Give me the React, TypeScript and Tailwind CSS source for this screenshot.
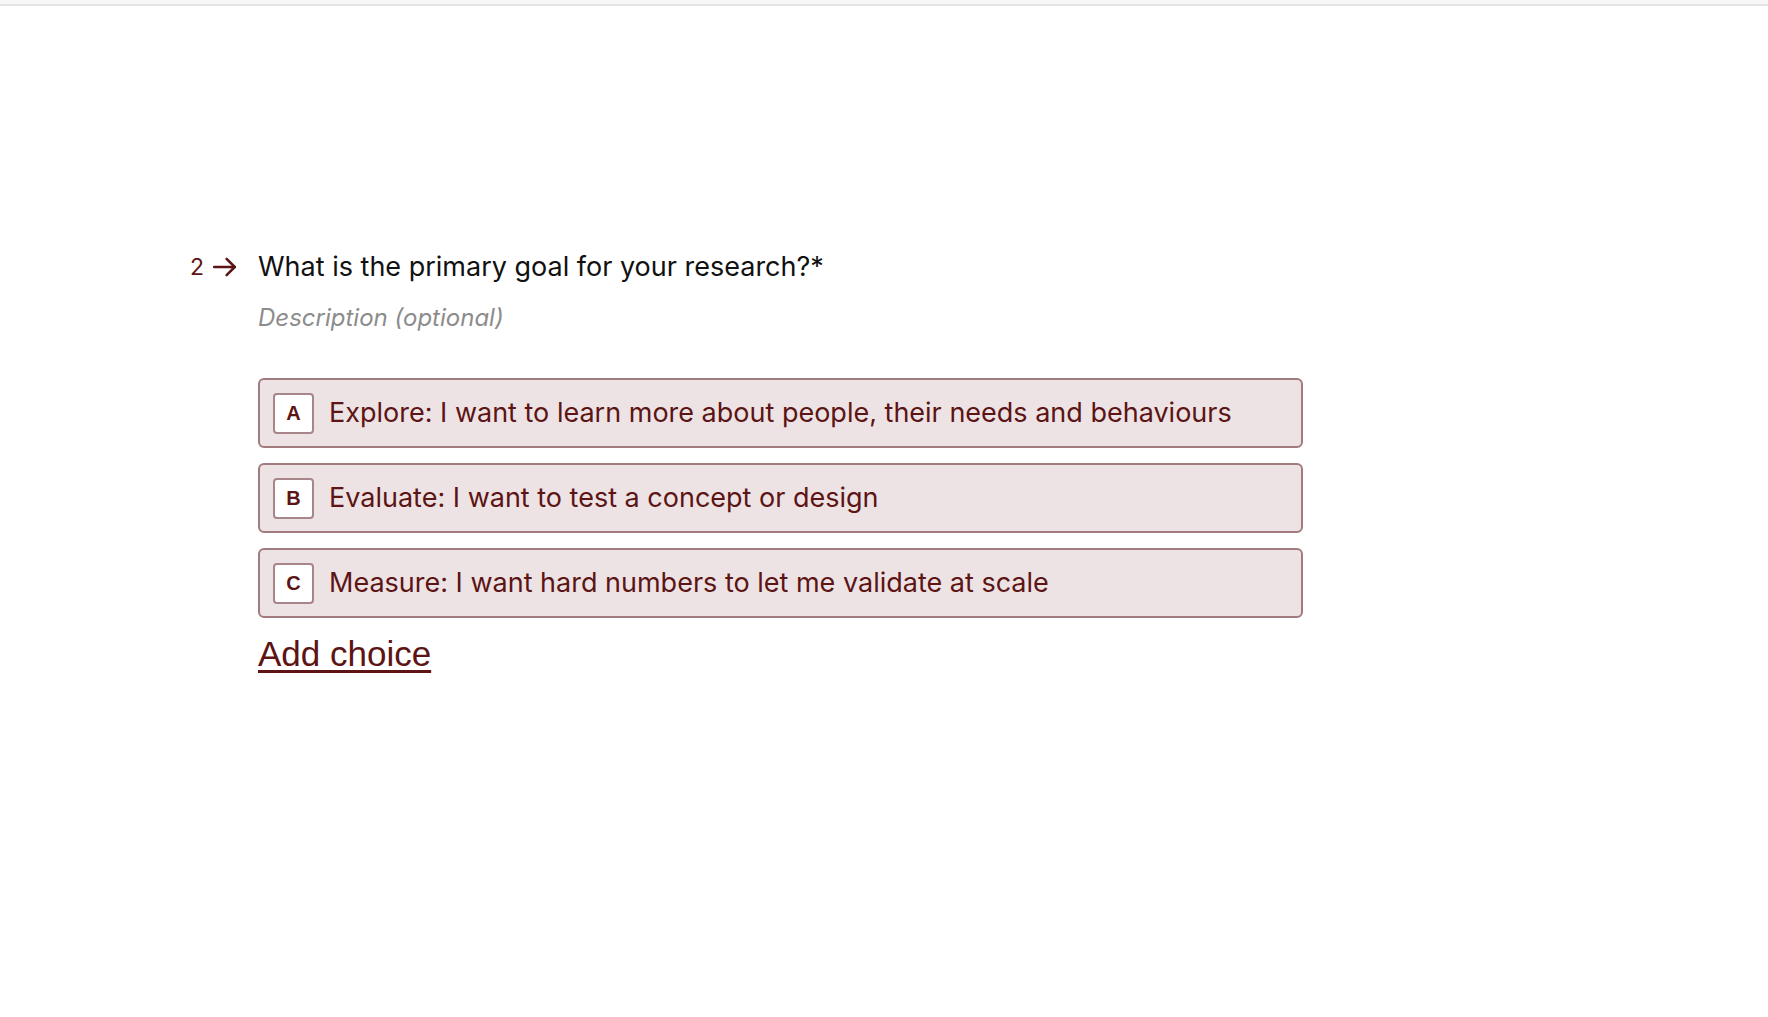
import React from "react";

const options = [
  { key: "A", text: "Explore: I want to learn more about people, their needs and behaviours" },
  { key: "B", text: "Evaluate: I want to test a concept or design" },
  { key: "C", text: "Measure: I want hard numbers to let me validate at scale" },
];

export default function App() {
  return (
    <div className="min-h-screen w-full bg-white" style={{ fontFamily: "Inter, 'Noto Sans', sans-serif" }}>
      <div className="h-[4px] w-full bg-[#f7f7f7]" />
      <div className="h-[2px] w-full bg-[#e4e4e4]" />
      <div className="pl-[190px] pt-[243px]">
        <div className="flex items-start">
          <div className="flex w-[68px] items-center gap-[8px] text-[#5c1414]">
            <span className="text-[23px] leading-[36px]">2</span>
            <svg width="26" height="26" viewBox="0 0 24 24" fill="none" stroke="#5c1414" strokeWidth="2.3" strokeLinecap="round" strokeLinejoin="round">
              <path d="M2 12h19" />
              <path d="M13.5 4.5L21 12l-7.5 7.5" />
            </svg>
          </div>
          <div className="flex flex-col">
            <div className="text-[27px] leading-[36px] text-[#111111]">What is the primary goal for your research?*</div>
            <div className="mt-[17px] text-[24px] italic leading-[32px] text-[#8c8c8c]">Description (optional)</div>
            <div className="mt-[44px] flex w-[1045px] flex-col gap-[15px]">
              {options.map((o) => (
                <div
                  key={o.key}
                  className="flex h-[70px] items-center gap-[15px] rounded-[6px] border-2 border-[#a27b7e] bg-[#ede3e4] px-[13px]"
                >
                  <div className="flex h-[41px] w-[41px] shrink-0 items-center justify-center rounded-[4px] border-2 border-[#a88588] bg-white text-[20px] font-bold text-[#5c1414]" style={{ fontFamily: "'Liberation Sans', Arial, sans-serif" }}>
                    {o.key}
                  </div>
                  <div className="whitespace-nowrap text-[27px] text-[#5c1414]">{o.text}</div>
                </div>
              ))}
            </div>
            <div className="mt-[14px]">
              <a href="#" className="text-[35px] leading-[44px] text-[#5c1414] underline decoration-[3px] underline-offset-[4px]" style={{ fontFamily: "'Liberation Sans', Arial, sans-serif" }}>
                Add choice
              </a>
            </div>
          </div>
        </div>
      </div>
    </div>
  );
}
